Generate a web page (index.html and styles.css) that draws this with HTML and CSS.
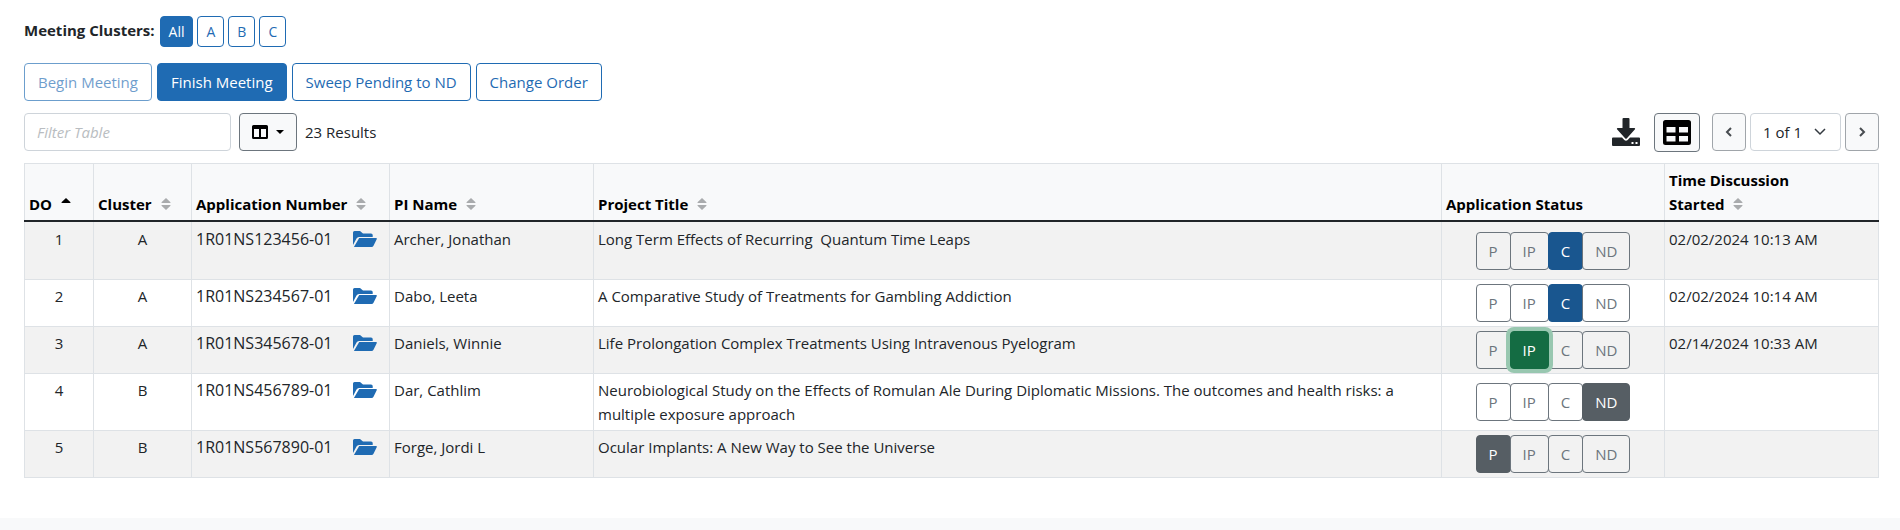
FILE: index.html
```
<!DOCTYPE html>
<html lang="en">
<head>
    <meta charset="utf-8">
    <title>Meeting Applications</title>
    <link rel="stylesheet" href="styles.css">
</head>
<body>
    <!-- Shared icons -->
    <svg class="icon-defs" aria-hidden="true">
        <symbol id="icon-folder" viewBox="0 0 24 16">
            <path d="M0 1.5Q0 0 1.5 0H7L10 2.5H18Q19.7 2.5 19.7 4V6H6Q4.300 6 3.500 7.500L0 14z"/>
            <path d="M6.200 7H23Q24.300 7 23.700 8.200L20.500 14.800Q19.900 16 18.500 16H.9z"/>
        </symbol>
        <symbol id="icon-sort" viewBox="0 0 10 12">
            <path d="M5 0L9.500 4.300Q9.800 5 9 5H1Q.2 5 .5 4.300zM5 12L9.500 7.700Q9.800 7 9 7H1Q.2 7 .5 7.700z"/>
        </symbol>
        <symbol id="icon-sort-up" viewBox="0 0 10 12">
            <path d="M5 0L9.500 4.300Q9.800 5 9 5H1Q.2 5 .5 4.300z"/>
        </symbol>
    </svg>

    <main class="content">
        <div class="cluster-bar">
            <strong>Meeting Clusters:</strong>
            <button type="button" class="btn btn-sm btn-primary">All</button>
            <button type="button" class="btn btn-sm btn-outline">A</button>
            <button type="button" class="btn btn-sm btn-outline">B</button>
            <button type="button" class="btn btn-sm btn-outline">C</button>
        </div>

        <div class="action-bar">
            <button type="button" class="btn btn-outline" disabled>Begin Meeting</button>
            <button type="button" class="btn btn-primary">Finish Meeting</button>
            <button type="button" class="btn btn-outline">Sweep Pending to ND</button>
            <button type="button" class="btn btn-outline">Change Order</button>
        </div>

        <div class="table-tools">
            <input type="text" class="filter-input" placeholder="Filter Table" aria-label="Filter Table">
            <button type="button" class="btn btn-light columns-btn" aria-label="Columns">
                <svg width="16" height="14" viewBox="0 0 16 14" fill-rule="evenodd"><path d="M1.500 0h13Q16 0 16 1.500v11Q16 14 14.500 14h-13Q0 14 0 12.500v-11Q0 0 1.500 0zM2 4v8h5V4zM9 4v8h5V4z"/></svg>
                <span class="caret"></span>
            </button>
            <span class="result-count">23 Results</span>

            <div class="view-tools">
                <button type="button" class="download-btn" aria-label="Download">
                    <svg width="28" height="28" viewBox="0 0 28 28" fill-rule="evenodd"><path d="M11.500 0h5Q17.500 0 17.500 1V10h5q1 .3.500 1.300L14.700 20.500q-.7.600-1.400 0L5 11.300Q4.500 10.300 5.500 10H10.500V1Q10.500 0 11.500 0z"/><path d="M1 19.500H10l2.300 2.500q1.700 1.400 3.400 0L18 19.500h9q1 0 1 1V27q0 1-1 1h-26Q0 28 0 27v-6.500Q0 19.500 1 19.500zM19.500 24v2h2v-2zM23.500 24v2h2v-2z"/></svg>
                </button>
                <button type="button" class="btn btn-light view-btn" aria-label="Table view">
                    <svg width="28" height="25" viewBox="0 0 28 25" fill-rule="evenodd"><path d="M2.500 0h23Q28 0 28 2.500v20Q28 25 25.500 25h-23Q0 25 0 22.500v-20Q0 0 2.500 0zM3.500 7v5.500h9V7zM16 7v5.500h9V7zM3.500 16v5.500h9V16zM16 16v5.500h9V16z"/></svg>
                </button>
                <div class="pager">
                    <button type="button" class="btn btn-light page-btn" aria-label="Previous page">
                        <svg width="8" height="10" viewBox="0 0 8 10"><path d="M6 1L2 5l4 4"/></svg>
                    </button>
                    <select class="page-select" aria-label="Page">
                        <option>1 of 1</option>
                    </select>
                    <button type="button" class="btn btn-light page-btn" aria-label="Next page">
                        <svg width="8" height="10" viewBox="0 0 8 10"><path d="M2 1l4 4-4 4"/></svg>
                    </button>
                </div>
            </div>
        </div>

        <table class="app-table">
            <colgroup>
                <col class="col-order">
                <col class="col-cluster">
                <col class="col-number">
                <col class="col-pi">
                <col>
                <col class="col-status">
                <col class="col-time">
            </colgroup>
            <thead>
                <tr>
                    <th>DO <svg class="sort active"><use href="#icon-sort-up"/></svg></th>
                    <th>Cluster <svg class="sort"><use href="#icon-sort"/></svg></th>
                    <th>Application Number <svg class="sort"><use href="#icon-sort"/></svg></th>
                    <th>PI Name <svg class="sort"><use href="#icon-sort"/></svg></th>
                    <th>Project Title <svg class="sort"><use href="#icon-sort"/></svg></th>
                    <th>Application Status</th>
                    <th>Time Discussion<br>Started <svg class="sort"><use href="#icon-sort"/></svg></th>
                </tr>
            </thead>
            <tbody>
                <tr class="tall">
                    <td class="center">1</td>
                    <td class="center">A</td>
                    <td><div class="app-number">1R01NS123456-01 <a href="#" aria-label="Open folder"><svg class="folder"><use href="#icon-folder"/></svg></a></div></td>
                    <td>Archer, Jonathan</td>
                    <td class="title">Long Term Effects of Recurring  Quantum Time Leaps</td>
                    <td class="status">
                        <div class="status-group">
                            <button type="button" class="status-btn">P</button>
                            <button type="button" class="status-btn">IP</button>
                            <button type="button" class="status-btn complete">C</button>
                            <button type="button" class="status-btn">ND</button>
                        </div>
                    </td>
                    <td>02/02/2024 10:13 AM</td>
                </tr>
                <tr>
                    <td class="center">2</td>
                    <td class="center">A</td>
                    <td><div class="app-number">1R01NS234567-01 <a href="#" aria-label="Open folder"><svg class="folder"><use href="#icon-folder"/></svg></a></div></td>
                    <td>Dabo, Leeta</td>
                    <td class="title">A Comparative Study of Treatments for Gambling Addiction</td>
                    <td class="status">
                        <div class="status-group">
                            <button type="button" class="status-btn">P</button>
                            <button type="button" class="status-btn">IP</button>
                            <button type="button" class="status-btn complete">C</button>
                            <button type="button" class="status-btn">ND</button>
                        </div>
                    </td>
                    <td>02/02/2024 10:14 AM</td>
                </tr>
                <tr>
                    <td class="center">3</td>
                    <td class="center">A</td>
                    <td><div class="app-number">1R01NS345678-01 <a href="#" aria-label="Open folder"><svg class="folder"><use href="#icon-folder"/></svg></a></div></td>
                    <td>Daniels, Winnie</td>
                    <td class="title">Life Prolongation Complex Treatments Using Intravenous Pyelogram</td>
                    <td class="status">
                        <div class="status-group">
                            <button type="button" class="status-btn">P</button>
                            <button type="button" class="status-btn in-progress">IP</button>
                            <button type="button" class="status-btn">C</button>
                            <button type="button" class="status-btn">ND</button>
                        </div>
                    </td>
                    <td>02/14/2024 10:33 AM</td>
                </tr>
                <tr>
                    <td class="center">4</td>
                    <td class="center">B</td>
                    <td><div class="app-number">1R01NS456789-01 <a href="#" aria-label="Open folder"><svg class="folder"><use href="#icon-folder"/></svg></a></div></td>
                    <td>Dar, Cathlim</td>
                    <td class="title">Neurobiological Study on the Effects of Romulan Ale During Diplomatic Missions. The outcomes and health risks: a multiple exposure approach</td>
                    <td class="status">
                        <div class="status-group">
                            <button type="button" class="status-btn">P</button>
                            <button type="button" class="status-btn">IP</button>
                            <button type="button" class="status-btn">C</button>
                            <button type="button" class="status-btn selected">ND</button>
                        </div>
                    </td>
                    <td></td>
                </tr>
                <tr>
                    <td class="center">5</td>
                    <td class="center">B</td>
                    <td><div class="app-number">1R01NS567890-01 <a href="#" aria-label="Open folder"><svg class="folder"><use href="#icon-folder"/></svg></a></div></td>
                    <td>Forge, Jordi L</td>
                    <td class="title">Ocular Implants: A New Way to See the Universe</td>
                    <td class="status">
                        <div class="status-group">
                            <button type="button" class="status-btn selected">P</button>
                            <button type="button" class="status-btn">IP</button>
                            <button type="button" class="status-btn">C</button>
                            <button type="button" class="status-btn">ND</button>
                        </div>
                    </td>
                    <td></td>
                </tr>
            </tbody>
        </table>
    </main>
    <footer class="footer"></footer>
</body>
</html>
```
FILE: styles.css
```
* {
    box-sizing: border-box;
}
body {
    margin: 0;
    min-height: 100vh;
    display: flex;
    flex-direction: column;
    font-family: "Open Sans", "Noto Sans", sans-serif;
    font-size: 15px;
    line-height: 24px;
    color: #212529;
    background-color: #fff;
}
button, input, select {
    font-family: inherit;
    font-size: inherit;
    line-height: inherit;
}
.icon-defs {
    display: none;
}
.content {
    padding: 16px 21px 40px 24px;
}
.cluster-bar {
    display: flex;
    align-items: flex-start;
    gap: 4px;
    margin-bottom: 16px;
}
.cluster-bar strong {
    padding: 2px 1px 0 0;
}
.action-bar {
    display: flex;
    gap: 5px;
    margin-bottom: 12px;
}
.btn {
    padding: 6px 12px;
    border: 1px solid transparent;
    border-radius: 4px;
    cursor: pointer;
}
.btn-sm {
    padding: 4px 8px;
    font-size: 14px;
    line-height: 21px;
}
.action-bar .btn {
    padding: 6px 13px;
}
.btn-primary {
    background-color: #1f6bb3;
    border-color: #1f6bb3;
    color: white;
}
.btn-outline {
    background-color: white;
    border-color: #1f6bb3;
    color: #1f6bb3;
}
.btn-outline:disabled {
    opacity: 0.65;
    cursor: default;
}
.btn-light {
    background-color: #f8f9fa;
    border-color: #6c757d;
}
.table-tools {
    display: flex;
    align-items: center;
    height: 38px;
    margin-bottom: 12px;
}
.filter-input {
    width: 207px;
    height: 38px;
    padding: 6px 12px;
    margin-right: 8px;
    border: 1px solid #ced4da;
    border-radius: 4px;
}
.filter-input::placeholder {
    color: #b9bdc1;
    font-style: italic;
}
.columns-btn {
    display: flex;
    align-items: center;
    gap: 8px;
    height: 38px;
    margin-right: 8px;
}
.caret {
    border-top: 4px solid black;
    border-left: 4px solid transparent;
    border-right: 4px solid transparent;
}
.view-tools {
    display: flex;
    align-items: center;
    margin-left: auto;
}
.download-btn {
    display: flex;
    padding: 0;
    margin-right: 14px;
    border: none;
    background: none;
    fill: #212529;
    cursor: pointer;
}
.view-btn {
    display: flex;
    padding: 6px 8px;
    margin-right: 12px;
}
.pager {
    display: flex;
    gap: 4px;
}
.page-btn {
    display: flex;
    align-items: center;
    height: 38px;
    border-color: #a0a5aa;
}
.page-btn path {
    fill: none;
    stroke: #484c50;
    stroke-width: 2;
}
.page-select {
    width: 91px;
    height: 38px;
    padding: 6px 12px;
    border: 1px solid #ced4da;
    border-radius: 4px;
    color: #212529;
    appearance: none;
    background: white url("data:image/svg+xml,%3Csvg xmlns='http://www.w3.org/2000/svg' viewBox='0 0 12 8'%3E%3Cpath fill='none' stroke='%23343a40' stroke-width='1.5' d='M1 1l5 5 5-5'/%3E%3C/svg%3E") no-repeat right 14px center / 12px 8px;
}
.app-table {
    width: 100%;
    table-layout: fixed;
    border-collapse: collapse;
}
.col-order {
    width: 69px;
}
.col-cluster {
    width: 98px;
}
.col-number {
    width: 198px;
}
.col-pi {
    width: 204px;
}
.col-status {
    width: 223px;
}
.col-time {
    width: 214px;
}
.app-table th,
.app-table td {
    height: 47px;
    padding: 4px;
    border: 1px solid #dee2e6;
    text-align: left;
    vertical-align: top;
}
.app-table th {
    border-bottom: 2px solid #212529;
    background-color: #f8f9fa;
    color: black;
    vertical-align: bottom;
}
.app-table tbody tr:nth-child(odd) {
    background-color: #f2f2f2;
}
.app-table .tall td {
    height: 58px;
    padding-top: 5px;
}
.app-table .center {
    text-align: center;
}
.app-table .title {
    padding-right: 40px;
    white-space: pre-wrap;
}
.app-table .status {
    vertical-align: middle;
}
.sort {
    width: 10px;
    height: 12px;
    margin-left: 5px;
    fill: #a9abad;
}
.sort.active {
    fill: black;
}
.app-number {
    display: flex;
    justify-content: space-between;
    align-items: center;
    padding-right: 8px;
    font-size: 16px;
}
.app-number a {
    display: flex;
}
.folder {
    width: 24px;
    height: 16px;
    fill: #1f6bb3;
}
.status-group {
    display: flex;
    justify-content: center;
}
.status-btn {
    height: 38px;
    padding: 6px 12px;
    border: 1px solid #6c757d;
    border-radius: 4px;
    background: none;
    color: #6c757d;
    cursor: pointer;
}
.status-btn + .status-btn {
    margin-left: -1px;
}
.status-btn.complete {
    background-color: #19568f;
    border-color: #19568f;
    color: white;
}
.status-btn.in-progress {
    z-index: 1;
    background-color: #146c43;
    border-color: #146c43;
    box-shadow: 0 0 0 4px #98c7b0;
    color: white;
}
.status-btn.selected {
    background-color: #565e64;
    border-color: #565e64;
    color: white;
}
.footer {
    flex: 1;
    background-color: #f8f9fa;
}
```
